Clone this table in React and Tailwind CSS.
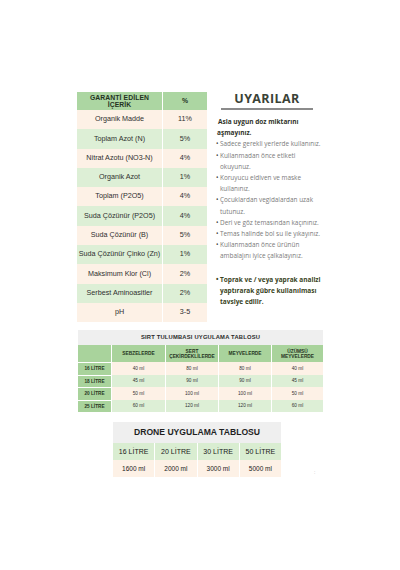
import React from "react";

const rows = [
  ["Organik Madde", "11%"],
  ["Toplam Azot (N)", "5%"],
  ["Nitrat Azotu (NO3-N)", "4%"],
  ["Organik Azot", "1%"],
  ["Toplam (P2O5)", "4%"],
  ["Suda Çözünür (P2O5)", "4%"],
  ["Suda Çözünür (B)", "5%"],
  ["Suda Çözünür Çinko (Zn)", "1%"],
  ["Maksimum Klor (Cl)", "2%"],
  ["Serbest Aminoasitler", "2%"],
  ["pH", "3-5"],
];

const sirt = [
  ["16 LİTRE", "40 ml", "80 ml", "80 ml", "40 ml"],
  ["18 LİTRE", "45 ml", "90 ml", "90 ml", "45 ml"],
  ["20 LİTRE", "50 ml", "100 ml", "100 ml", "50 ml"],
  ["25 LİTRE", "60 ml", "120 ml", "120 ml", "60 ml"],
];

const bullets = [
  ["Sadece gerekli yerlerde kullanınız."],
  ["Kullanmadan önce etiketi", "okuyunuz."],
  ["Koruyucu eldiven ve maske", "kullanınız."],
  ["Çocuklardan vegidalardan uzak", "tutunuz."],
  ["Deri ve göz temasından kaçınınız."],
  ["Temas halinde bol su ile yıkayınız."],
  ["Kullanmadan önce ürünün", "ambalajını iyice çalkalayınız."],
];

export default function App() {
  return (
    <div
      className="w-[400px] h-[570px] bg-white overflow-hidden"
      style={{ fontFamily: '"Liberation Sans", Arial, sans-serif' }}
    >
      <div className="pt-[92px] pl-[77px] flex">
        {/* left table */}
        <div className="w-[130px] flex flex-col">
          <div className="h-[18px] flex bg-[#acd6a2]">
            <div className="w-[86px] flex flex-col items-center justify-center border-r border-white text-[6.8px] leading-[7px] font-bold text-[#24331f] tracking-[0.1px]">
              <span>GARANTİ EDİLEN</span>
              <span>İÇERİK</span>
            </div>
            <div className="flex-1 flex items-center justify-center text-[6.8px] font-bold text-[#24331f]">%</div>
          </div>
          {rows.map((r, i) => (
            <div
              key={i}
              className={`h-[19.3px] flex text-[7.2px] text-[#2f2f2f] ${i % 2 === 0 ? "bg-[#fdf1e6]" : "bg-[#ddefd6]"}`}
            >
              <div className="w-[86px] flex items-center justify-center border-r border-white whitespace-nowrap">{r[0]}</div>
              <div className="flex-1 flex items-center justify-center">{r[1]}</div>
            </div>
          ))}
        </div>

        {/* right column */}
        <div className="ml-[6px] w-[108px] flex flex-col" style={{ fontFamily: '"Open Sans", Lato, sans-serif' }}>
          <div className="text-center text-[12.5px] leading-[16px] font-bold text-[#3a4236] tracking-[0.4px] -mt-[1px]">UYARILAR</div>
          <div className="mt-[1px] ml-[8px] w-[92px] h-[2px] bg-[#8b8b8b]"></div>
          <div className="mt-[6px] pl-[5px] text-[6.5px] leading-[11.2px] font-bold text-[#2f3328]">
            <div>Asla uygun doz miktarını</div>
            <div className="-ml-[1px]">aşmayınız.</div>
          </div>
          <div className="pl-[3px] text-[6.4px] leading-[11.2px] text-[#7a7a7a]">
            {bullets.map((b, i) => (
              <div key={i} className="flex">
                <span className="w-[4px] text-[#444]">•</span>
                <div className="flex flex-col whitespace-nowrap">
                  {b.map((l, j) => (
                    <span key={j}>{l}</span>
                  ))}
                </div>
              </div>
            ))}
          </div>
          <div className="mt-[12px] pl-[3px] text-[6.5px] leading-[11.2px] font-bold text-[#3a4424] flex">
            <span className="w-[4px]">•</span>
            <div className="flex flex-col whitespace-nowrap">
              <span>Toprak ve / veya yaprak analizi</span>
              <span>yaptırarak gübre kullanılması</span>
              <span>tavsiye edilir.</span>
            </div>
          </div>
        </div>
      </div>

      {/* SIRT table */}
      <div className="mt-[8px] ml-[78px] w-[245px] flex flex-col">
        <div className="h-[15px] bg-[#efefef] flex items-center justify-center text-[5.8px] font-bold text-[#2b2b2b] tracking-[0.2px]">
          SIRT TULUMBASI UYGULAMA TABLOSU
        </div>
        <div className="h-[17px] flex bg-[#a9d39c] text-[4.8px] leading-[5.2px] font-bold text-[#27361f] text-center">
          <div className="w-[34px] border-r border-white"></div>
          <div className="w-[54px] flex items-center justify-center border-r border-white">SEBZELERDE</div>
          <div className="w-[53px] flex flex-col items-center justify-center border-r border-white">
            <span>SERT</span>
            <span>ÇEKİRDEKLİLERDE</span>
          </div>
          <div className="w-[53px] flex items-center justify-center border-r border-white">MEYVELERDE</div>
          <div className="flex-1 flex flex-col items-center justify-center">
            <span>ÜZÜMSÜ</span>
            <span>MEYVELERDE</span>
          </div>
        </div>
        {sirt.map((r, i) => (
          <div key={i} className="h-[12.5px] flex text-[4.7px] text-[#333]">
            <div className="w-[34px] bg-[#a9d39c] flex items-center justify-center font-bold text-[#27361f] border-r border-white border-t">
              {r[0]}
            </div>
            {r.slice(1).map((c, j) => (
              <div
                key={j}
                className={`${j === 3 ? "flex-1" : j === 0 ? "w-[54px] border-r" : "w-[53px] border-r"} border-white flex items-center justify-center ${i % 2 === 0 ? "bg-[#fdf1e6]" : "bg-[#ddefd6]"}`}
              >
                {c}
              </div>
            ))}
          </div>
        ))}
      </div>

      {/* Drone table */}
      <div className="mt-[10px] ml-[113px] flex">
        <div className="w-[168px] flex flex-col">
          <div className="h-[21px] bg-[#efefef] flex items-center justify-center text-[8.6px] font-bold text-[#1f1f1f]">
            DRONE UYGULAMA TABLOSU
          </div>
          <div className="h-[17px] flex bg-[#d9edd1] text-[7px] text-[#1a1a1a]">
            {["16 LİTRE", "20 LİTRE", "30 LİTRE", "50 LİTRE"].map((t, i) => (
              <div key={i} className={`flex-1 flex items-center justify-center ${i < 3 ? "border-r border-white" : ""}`}>{t}</div>
            ))}
          </div>
          <div className="h-[17px] flex bg-[#fdf1e6] text-[6.5px] text-[#1a1a1a]">
            {["1600 ml", "2000 ml", "3000 ml", "5000 ml"].map((t, i) => (
              <div key={i} className={`flex-1 flex items-center justify-center ${i < 3 ? "border-r border-white" : ""}`}>{t}</div>
            ))}
          </div>
        </div>
        <span className="ml-[33px] mt-[48px] text-[5px] leading-[5px] text-[#aaa]">:</span>
      </div>
    </div>
  );
}
